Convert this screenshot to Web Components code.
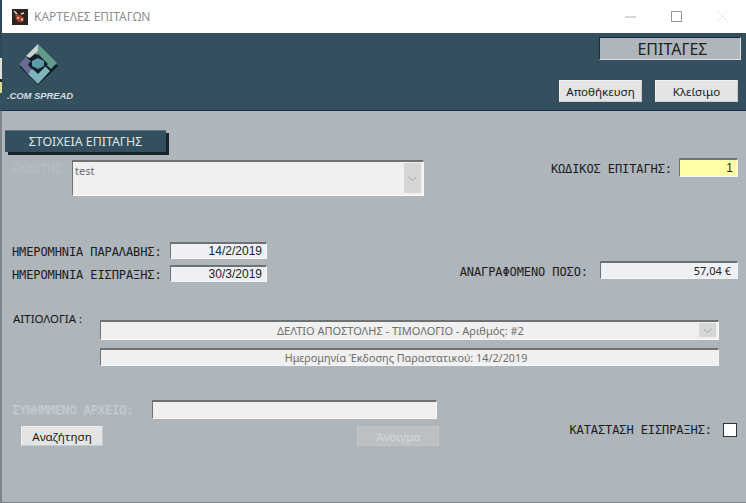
<!DOCTYPE html>
<html><head><meta charset="utf-8"><style>
html,body{margin:0;padding:0;width:746px;height:503px;overflow:hidden;background:#aeb5bb}
body{font-family:"Noto Sans","Liberation Sans",sans-serif}
</style></head><body>
<bid-window></bid-window>
<script>
const el=(name,css,html)=>{customElements.define(name,class extends HTMLElement{
 constructor(){super();const s=this.attachShadow({mode:'open'});s.innerHTML='<style>'+css+'</style>'+(typeof html==='function'?html(this):html);}
});};
const attr=(t,a,d='')=>t.getAttribute(a)??d;

el('title-bar',`:host{display:flex;align-items:center;height:33px;background:#fff;box-sizing:border-box;padding-left:10px;font:12px "Noto Sans",sans-serif;color:#8f8f8f}
 svg{display:block;flex:none}.t{margin-left:6px;flex:1}
 .b{width:46px;height:33px;display:flex;align-items:center;justify-content:center;flex:none}`,
`<svg width="16" height="16" viewBox="0 0 16 16"><rect width="16" height="16" fill="#2b2522"/><path d="M3 5l5 1 4 3-1 4-5 0-2-3z" fill="#a8402e"/><path d="M2 2l3 3M9 5l3-1M5 9h2M9 10l2 1" stroke="#e7d9c5" stroke-width="1.4"/></svg>
<span class="t">ΚΑΡΤΕΛΕΣ ΕΠΙΤΑΓΩΝ</span>
<span class="b"><svg width="11" height="11"><path d="M0 6h11" stroke="#b0b0b0"/></svg></span>
<span class="b"><svg width="11" height="11"><rect x=".5" y=".5" width="10" height="10" fill="none" stroke="#9a9a9a"/></svg></span>
<span class="b" style="margin-right:1px"><svg width="11" height="11"><path d="M.5.5l10 10M10.5.5l-10 10" stroke="#e8e8e8"/></svg></span>`);

el('brand-logo',`:host{display:flex;flex-direction:column;align-items:center;width:66px;margin-top:6px;font:italic 700 9.5px "Liberation Sans",sans-serif;color:#d3dce0}
 svg{display:block;filter:blur(.35px)} span{margin:5px 0 0 4px;white-space:nowrap;letter-spacing:-.1px}`,
`<svg width="42" height="42" viewBox="0 0 42 42">
<path d="M21 4L41 23 21 42 3 24z" fill="#101b22"/>
<path d="M21 1L40 20 34 26 27 20 21 13 15 8z" fill="#5f9a8b"/>
<path d="M21 1L9 13 13 15 21 8z" fill="#c8d2d2"/>
<path d="M2 21L9 14 15 19 11 22 16 27 11 31z" fill="#6a6d93"/>
<path d="M11 31L21 41 33 28 28 23 21 30 15 26z" fill="#7fb4bd"/>
<path d="M21 11L31 21 21 31 11 21z" fill="#14222b"/>
<path d="M21 15L27 18 27 23 21 26 15 23 15 18z" fill="#5d9aa5"/>
</svg><span>.COM SPREAD</span>`);

el('app-header',`:host{display:flex;justify-content:space-between;height:78px;background:#34505f;border-bottom:1px solid #23294f;box-sizing:border-box;padding:4px 5px 0 3px}
 .r{display:flex;flex-direction:column;align-items:flex-end}
 .box{width:142px;height:23px;box-sizing:border-box;background:#aeb5bb;border:1px solid #1d2b34;border-right-color:#dbe0e3;border-bottom-color:#dbe0e3;font:16px "Noto Sans",sans-serif;color:#222;display:flex;align-items:center;justify-content:center;padding-left:5px}
 .btns{display:flex;gap:13px;margin:20px 3px 0 0}`,
`<brand-logo></brand-logo><div class="r"><div class="box">ΕΠΙΤΑΓΕΣ</div><div class="btns"><form-button w="83" h="22">Αποθήκευση</form-button><form-button w="83" h="22">Κλείσιμο</form-button></div></div>`);

el('form-button',`:host{display:inline-flex}
 .b{box-sizing:border-box;display:flex;align-items:center;justify-content:center;background:#e4e4e4;border:1px solid #eeeeee;border-right-color:#c8ccce;border-bottom-color:#c8ccce;font:11.6px "Noto Sans",sans-serif;color:#1a1a1a}
 :host([disabled]) .b{background:#bcc0c3;border-color:#c2c5c8;color:#d5d8da;}`,
t=>`<div class="b" style="width:${attr(t,'w',82)}px;height:${attr(t,'h',20)}px"><slot></slot></div>`);

el('section-title',`:host{display:block;width:164px;height:25px}
 .s{width:161px;height:22px;box-sizing:border-box;background:#34505f;border-top:1px solid #5d7482;color:#dfe6ea;font:12.4px "Noto Sans",sans-serif;display:flex;align-items:center;justify-content:center;box-shadow:3px 3px 0 #17242c}`,
`<div class="s"><slot></slot></div>`);

el('field-box',`:host{display:block}
 .f{box-sizing:border-box;height:100%;background:#eef0f3;border-top:2px solid #6d7276;border-left:1px solid #6d7276;border-right:1px solid #f6f7f8;border-bottom:1px solid #f6f7f8;display:flex;align-items:center;padding:0 7px;font:12px "Noto Sans",sans-serif;color:#222}
 :host([type=num]) .f{font:12px "Liberation Sans",sans-serif;justify-content:flex-end;padding:0 4px}
 :host([type=money]) .f{justify-content:flex-end;padding:0 6px;font-size:11px}
 :host([tone=yellow]) .f{background:#ffffa8}
 :host([tone=off]) .f{background:#f0f0f0;color:#6d6d6d;justify-content:center;font-size:10.8px;padding:0 7px 0 0}`,
`<div class="f"><slot></slot></div>`);

el('combo-box',`:host{display:block}
 .f{box-sizing:border-box;height:100%;position:relative;background:#f0f0f0;border-top:2px solid #6d7276;border-left:1px solid #6d7276;border-right:1px solid #f8f8f8;border-bottom:1px solid #f8f8f8;font:11px "Noto Sans",sans-serif;color:#6d6d6d;display:flex;padding:1px 20px 0 2px;line-height:15px}
 .a{position:absolute;right:2px;top:1px;bottom:2px;width:17px;background:#d6d6d6;display:flex;align-items:center;justify-content:center}
 .t{flex:1;text-align:var(--ta,left)}`,
`<div class="f"><span class="t"><slot></slot></span><span class="a"><svg width="9" height="5"><path d="M.5.5l4 4 4-4" fill="none" stroke="#a8a8a8"/></svg></span></div>`);

el('mono-label',`:host{display:block;padding-top:3px;font:12px "DejaVu Sans Mono","Liberation Mono",monospace;letter-spacing:-.1px;color:#1c1c1c;white-space:pre}
 :host([off]){color:#c6cbcf;text-shadow:1px 1px 0 #bcc2c6}`,`<slot></slot>`);

el('bid-form',`:host{display:block;height:391px;box-sizing:border-box;padding:19px 8px 0 3px}
 .row{display:flex;justify-content:space-between;align-items:flex-start}
 .r1{margin-top:3px;padding-left:7px}
 .iss{display:flex;width:412px;margin-top:2px}.iss mono-label{width:60px;line-height:18px;padding:0;color:#b9bfc3;text-shadow:none}
 .iss combo-box{width:352px;height:36px}
 .code{display:flex;align-items:center;height:19px;gap:7px}.code field-box{width:59px;height:19px}
 .r2{margin-top:46px;padding-left:7px;height:39px}
 .dates{display:grid;grid-template-columns:158px 97px;row-gap:6px;align-items:center}.dates field-box{height:17px}.dates mono-label{line-height:14px}
 .amt{display:flex;align-items:center;gap:12px;margin-top:19px}.amt field-box{width:138px;height:18px}
 .r3{margin-top:29px;padding-left:7px;height:56px}
 .r3 .a{display:flex;align-items:flex-start}
 .lab{font:11.5px "Noto Sans",sans-serif;color:#141414;width:88px;line-height:17px;padding-left:1px;box-sizing:border-box}
 .r3 combo-box{width:619px;height:20px;margin-top:10px;--ta:center}
 .r3 .b{margin:8px 0 0 88px;width:619px;height:18px}
 .r4{margin-top:34px;padding-left:7px;height:46px}
 .att{display:flex;align-items:center;gap:18px}.att mono-label{width:122px;padding-top:1px}.att field-box{width:285px;height:19px}
 .left{width:427px}
 .btns{display:flex;justify-content:space-between;margin:7px 0 0 9px}
 .chk{display:flex;align-items:center;gap:11px;margin:23px 1px 0 0}.chk mono-label{padding:0}.box{width:14px;height:14px;box-sizing:border-box;background:#fff;border:1px solid #333}`,
`<section-title>ΣΤΟΙΧΕΙΑ ΕΠΙΤΑΓΗΣ</section-title>
<div class="row r1"><div class="iss"><mono-label off>ΕΚΔΟΤΗΣ:</mono-label><combo-box>test</combo-box></div>
 <div class="code"><mono-label>ΚΩΔΙΚΟΣ ΕΠΙΤΑΓΗΣ:</mono-label><field-box type="num" tone="yellow">1</field-box></div></div>
<div class="row r2"><div class="dates"><mono-label>ΗΜΕΡΟΜΗΝΙΑ ΠΑΡΑΛΑΒΗΣ:</mono-label><field-box type="num">14/2/2019</field-box><mono-label>ΗΜΕΡΟΜΗΝΙΑ ΕΙΣΠΡΑΞΗΣ:</mono-label><field-box type="num">30/3/2019</field-box></div>
 <div class="amt"><mono-label>ΑΝΑΓΡΑΦΟΜΕΝΟ ΠΟΣΟ:</mono-label><field-box type="money">57,04 €</field-box></div></div>
<div class="r3"><div class="a"><div class="lab">ΑΙΤΙΟΛΟΓΙΑ :</div><combo-box>ΔΕΛΤΙΟ ΑΠΟΣΤΟΛΗΣ - ΤΙΜΟΛΟΓΙΟ - Αριθμός: #2</combo-box></div><field-box class="b" tone="off">Ημερομηνία Έκδοσης Παραστατικού: 14/2/2019</field-box></div>
<div class="row r4"><div class="left"><div class="att"><mono-label off>ΣΥΝΗΜΜΕΝΟ ΑΡΧΕΙΟ:</mono-label><field-box tone="off"></field-box></div><div class="btns"><form-button w="82">Αναζήτηση</form-button><form-button w="82" disabled>Άνοιγμα</form-button></div></div>
 <div class="chk"><mono-label>ΚΑΤΑΣΤΑΣΗ ΕΙΣΠΡΑΞΗΣ:</mono-label><div class="box"></div></div></div>`);

el('bid-window',`:host{display:block;width:746px;height:503px;box-sizing:border-box;padding-left:2px;border-bottom:1px solid #7e8488;position:relative;overflow:hidden}
 .edge{position:absolute;left:0;top:0;bottom:0;width:2px;background:linear-gradient(#2d4858 0,#2d4858 58px,#dfe3dc 58px,#dfe3dc 79px,#2b2b20 79px,#2b2b20 82px,#d8dc9a 82px,#d8dc9a 93px,#34505f 93px,#34505f 111px,#7e8488 111px)}`,
`<div class="edge"></div><title-bar></title-bar><app-header></app-header><bid-form></bid-form>`);
</script></body></html>
